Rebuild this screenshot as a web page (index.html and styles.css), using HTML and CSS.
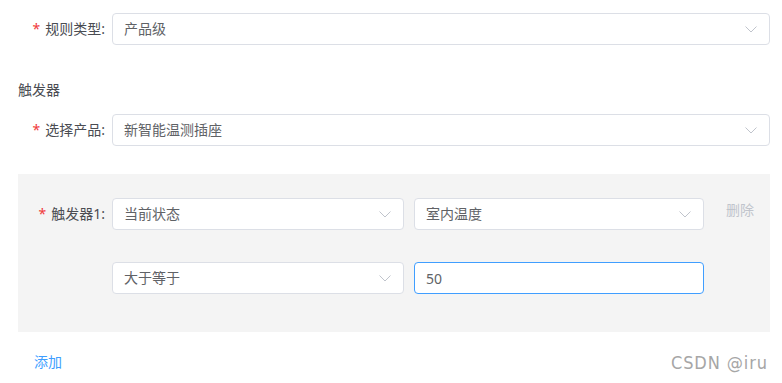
FILE: index.html
```html
<!DOCTYPE html>
<html lang="zh-CN">
<head>
    <meta charset="UTF-8">
    <meta name="viewport" content="width=device-width, initial-scale=1.0">
    <title>规则配置</title>
    <link rel="stylesheet" href="styles.css">
</head>
<body>

    <div class="rule-form">
        <div class="form-item">
            <label class="form-label"><span class="required">*</span>规则类型:</label>
            <div class="select">
                <span class="select-text">产品级</span>
                <svg class="arrow" width="12" height="7" viewBox="0 0 12 7"><path d="M0.5 0.5 L6 6 L11.5 0.5" fill="none" stroke="#c0c4cc" stroke-width="1"/></svg>
            </div>
        </div>

        <h4 class="section-title">触发器</h4>

        <div class="form-item">
            <label class="form-label"><span class="required">*</span>选择产品:</label>
            <div class="select">
                <span class="select-text">新智能温测插座</span>
                <svg class="arrow" width="12" height="7" viewBox="0 0 12 7"><path d="M0.5 0.5 L6 6 L11.5 0.5" fill="none" stroke="#c0c4cc" stroke-width="1"/></svg>
            </div>
        </div>

        <div class="trigger-box">
            <div class="trigger-row">
                <label class="form-label"><span class="required">*</span>触发器1:</label>
                <div class="fields">
                    <div class="select">
                        <span class="select-text">当前状态</span>
                        <svg class="arrow" width="12" height="7" viewBox="0 0 12 7"><path d="M0.5 0.5 L6 6 L11.5 0.5" fill="none" stroke="#c0c4cc" stroke-width="1"/></svg>
                    </div>
                    <div class="select">
                        <span class="select-text">室内温度</span>
                        <svg class="arrow" width="12" height="7" viewBox="0 0 12 7"><path d="M0.5 0.5 L6 6 L11.5 0.5" fill="none" stroke="#c0c4cc" stroke-width="1"/></svg>
                    </div>
                </div>
                <div class="row-action">
                    <button class="del-btn">删除</button>
                </div>
            </div>

            <div class="trigger-row second">
                <div class="form-label"></div>
                <div class="fields">
                    <div class="select">
                        <span class="select-text">大于等于</span>
                        <svg class="arrow" width="12" height="7" viewBox="0 0 12 7"><path d="M0.5 0.5 L6 6 L11.5 0.5" fill="none" stroke="#c0c4cc" stroke-width="1"/></svg>
                    </div>
                    <input class="text-input" type="text" value="50">
                </div>
                <div class="row-action"></div>
            </div>
        </div>

        <a class="add-link" href="#">添加</a>
    </div>

    <div class="watermark">CSDN @iru</div>

</body>
</html>
```

FILE: styles.css
```css
* {
    box-sizing: border-box;
    margin: 0;
    padding: 0;
}

body {
    background: white;
    font-family: "Noto Sans", "Noto Sans CJK SC", sans-serif;
    font-size: 14px;
    color: #606266;
}

.rule-form {
    padding: 13px 12px 0 18px;
}

.form-item {
    display: flex;
    margin-bottom: 35px;
}

.form-label {
    width: 94px;
    flex-shrink: 0;
    text-align: right;
    line-height: 32px;
    padding-right: 7px;
    color: #4a4c52;
    white-space: nowrap;
}

.required {
    color: #f0393c;
    margin-right: 5px;
}

.select {
    flex: 1;
    height: 32px;
    display: flex;
    align-items: center;
    justify-content: space-between;
    background: white;
    border: 1px solid #dcdfe6;
    border-radius: 4px;
    padding: 0 12px 0 11px;
}

.select-text {
    line-height: 30px;
    color: #606266;
}

.arrow {
    display: block;
}

.section-title {
    font-weight: normal;
    font-size: 14px;
    line-height: 20px;
    color: #4a4c52;
    margin: 0 0 14px;
}

.form-item + .trigger-box {
    margin-top: -7px;
}

.trigger-box {
    background: #f4f4f4;
    padding: 24px 0 38px;
}

.trigger-row {
    display: flex;
}

.trigger-row.second {
    margin-top: 32px;
}

.fields {
    flex: 1;
    display: grid;
    grid-template-columns: 292px 1fr;
    column-gap: 10px;
}

.text-input {
    height: 32px;
    border: 1px solid #409eff;
    border-radius: 4px;
    padding: 0 11px;
    font-family: "Noto Sans", "Noto Sans CJK SC", sans-serif;
    font-size: 14px;
    color: #606266;
    outline: none;
    width: 100%;
}

.row-action {
    width: 66px;
    flex-shrink: 0;
    padding-left: 22px;
}

.del-btn {
    background: none;
    border: none;
    font-family: "Noto Sans", "Noto Sans CJK SC", sans-serif;
    font-size: 14px;
    line-height: 24px;
    color: #c0c4cc;
    cursor: not-allowed;
}

.add-link {
    display: inline-block;
    margin: 20px 0 0 16px;
    line-height: 20px;
    color: #409eff;
    text-decoration: none;
}

.watermark {
    position: absolute;
    right: 14px;
    bottom: 10px;
    font-family: "DejaVu Sans Condensed", sans-serif;
    font-size: 18px;
    color: #a6a6a6;
    letter-spacing: 0.9px;
}
```
